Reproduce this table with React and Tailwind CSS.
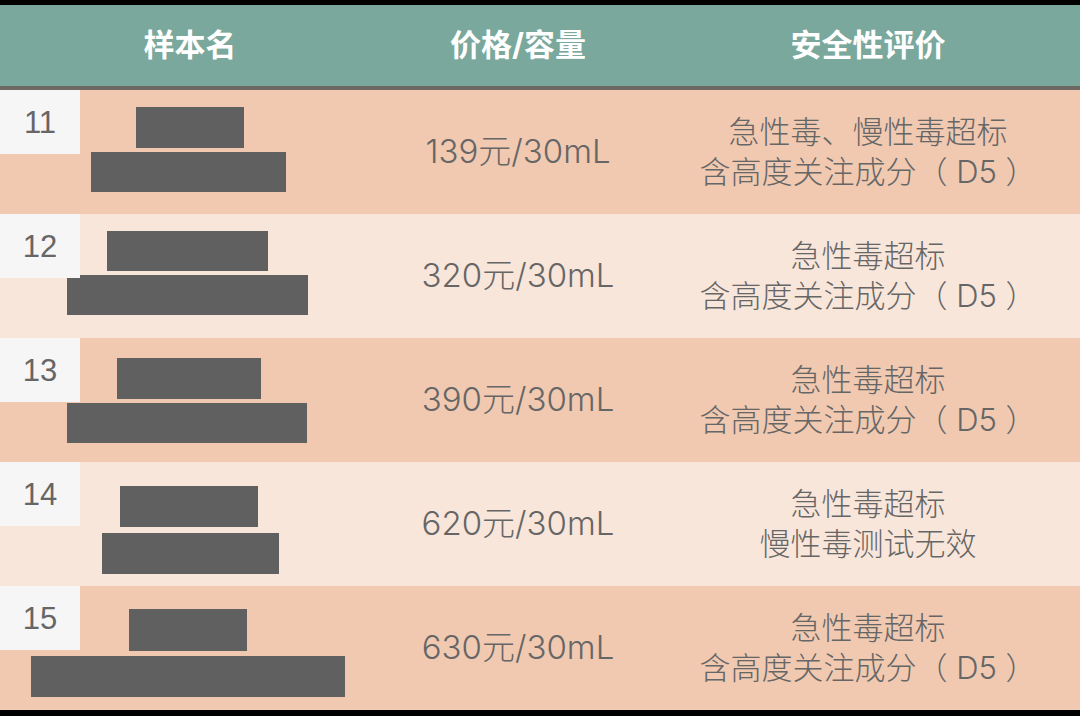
const rows = [
  {
    no: '11',
    price: '139元/30mL',
    evals: ['急性毒、慢性毒超标', '含高度关注成分（ D5 ）'],
    dark: true,
    top: 17,
    gap: 4,
    blocks: [
      { left: 136, width: 108, height: 41 },
      { left: 91, width: 195, height: 40 },
    ],
  },
  {
    no: '12',
    price: '320元/30mL',
    evals: ['急性毒超标', '含高度关注成分（ D5 ）'],
    dark: false,
    top: 17,
    gap: 4,
    blocks: [
      { left: 107, width: 161, height: 40 },
      { left: 67, width: 241, height: 40 },
    ],
  },
  {
    no: '13',
    price: '390元/30mL',
    evals: ['急性毒超标', '含高度关注成分（ D5 ）'],
    dark: true,
    top: 20,
    gap: 4,
    blocks: [
      { left: 117, width: 144, height: 41 },
      { left: 67, width: 240, height: 40 },
    ],
  },
  {
    no: '14',
    price: '620元/30mL',
    evals: ['急性毒超标', '慢性毒测试无效'],
    dark: false,
    top: 24,
    gap: 6,
    blocks: [
      { left: 120, width: 138, height: 41 },
      { left: 102, width: 177, height: 41 },
    ],
  },
  {
    no: '15',
    price: '630元/30mL',
    evals: ['急性毒超标', '含高度关注成分（ D5 ）'],
    dark: true,
    top: 23,
    gap: 5,
    blocks: [
      { left: 129, width: 118, height: 42 },
      { left: 31, width: 314, height: 41 },
    ],
  },
];

const font = { fontFamily: 'Inter, "Noto Sans CJK SC", sans-serif' };

function Row({ row }) {
  return (
    <div
      className={`grid grid-cols-[380px_276px_1fr] h-[124px] ${row.dark ? 'bg-[#f1c9b1]' : 'bg-[#f9e6db]'}`}
    >
      {/* sample name (redacted) */}
      <div className="relative">
        <div className="absolute left-0 top-0 w-[80px] h-[64px] bg-[#f6f6f6] flex items-center justify-center pt-[2px] font-['Liberation_Sans',sans-serif] text-[31px] text-[#666666]">
          {row.no}
        </div>
        <div className="flex flex-col" style={{ paddingTop: row.top, gap: row.gap }}>
          {row.blocks.map((b, i) => (
            <div
              key={i}
              className="bg-[#606060]"
              style={{ marginLeft: b.left, width: b.width, height: b.height }}
            />
          ))}
        </div>
      </div>

      <div className="flex items-center justify-center text-[33px] font-light text-[#666666]">
        {row.price}
      </div>

      <div className="flex flex-col items-center justify-center text-[31px] leading-[40px] font-light text-[#666666]">
        {row.evals.map((t) => (
          <div key={t}>{t}</div>
        ))}
      </div>
    </div>
  );
}

export default function App() {
  return (
    <main className="w-[1080px] h-[716px] bg-black pt-[5px] overflow-hidden" style={font}>
      <div className="grid grid-cols-[380px_276px_1fr] h-[81px] bg-[#7aa89c] text-white text-[31px] font-bold">
        <div className="flex items-center justify-center">样本名</div>
        <div className="flex items-center justify-center">价格/容量</div>
        <div className="flex items-center justify-center">安全性评价</div>
      </div>
      <div className="h-[4px] bg-[#6d6863]" />
      {rows.map((row) => (
        <Row key={row.no} row={row} />
      ))}
    </main>
  );
}
